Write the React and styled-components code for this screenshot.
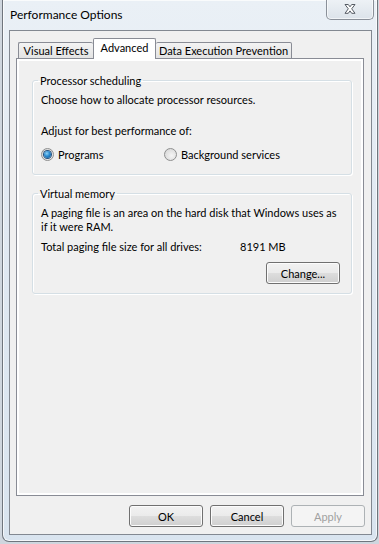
import styled, { createGlobalStyle } from "styled-components";

const GlobalStyle = createGlobalStyle`
  html, body {
    margin: 0;
    padding: 0;
    background: #cfd6de;
  }
  body {
    font-family: Lato, "Liberation Sans", sans-serif;
    font-size: 11px;
    color: #000;
  }
`;

function App() {
  return (
    <>
      <GlobalStyle />
      <Window>
        <TitleBar>
          <Title>Performance Options</Title>
          <CloseButton>
            <svg width="12" height="10" viewBox="0 0 12 10">
              <path
                d="M1 0.5 L4.3 0.5 L6 2.8 L7.7 0.5 L11 0.5 L7.7 4.8 L11 9.3 L7.7 9.3 L6 6.9 L4.3 9.3 L1 9.3 L4.3 4.8 Z"
                fill="#fff"
                stroke="#555b63"
                strokeWidth="1"
                strokeLinejoin="round"
              />
            </svg>
          </CloseButton>
        </TitleBar>
        <Client>
          <TabRow>
            <Tab $w={75} $side="left">Visual Effects</Tab>
            <Tab $w={63} $active>Advanced</Tab>
            <Tab $w={136} $side="right">Data Execution Prevention</Tab>
          </TabRow>
          <Panel>
            <Group>
              <Legend>Processor scheduling</Legend>
              <Line $top={4}>Choose how to allocate processor resources.</Line>
              <Line $top={16}>Adjust for best performance of:</Line>
              <RadioRow>
                <RadioLabel>
                  <Radio $checked />
                  Programs
                </RadioLabel>
                <RadioLabel>
                  <Radio />
                  Background services
                </RadioLabel>
              </RadioRow>
            </Group>
            <Group $bottom={9}>
              <Legend>Virtual memory</Legend>
              <Para>
                A paging file is an area on the hard disk that Windows uses as
                <br />
                if it were RAM.
              </Para>
              <SizeRow>
                <span>Total paging file size for all drives:</span>
                <span>8191 MB</span>
              </SizeRow>
              <ChangeRow>
                <Button>Change...</Button>
              </ChangeRow>
            </Group>
          </Panel>
          <ButtonRow>
            <Button>OK</Button>
            <Button>Cancel</Button>
            <Button disabled>Apply</Button>
          </ButtonRow>
        </Client>
      </Window>
    </>
  );
}

const Window = styled.div`
  box-sizing: border-box;
  width: 376px;
  height: 542px;
  margin-left: 2px;
  display: flex;
  flex-direction: column;
  padding: 0 5px 6px 6px;
  border: 1px solid #6f757d;
  border-top: none;
  border-radius: 0 0 7px 7px;
  background: linear-gradient(to bottom, #eaf0f6 0%, #e1e9f2 40%, #d9e4ef 100%);
  box-shadow: inset 0 0 0 1px rgba(255, 255, 255, 0.7);
`;

const TitleBar = styled.div`
  height: 30px;
  flex: none;
  display: flex;
  justify-content: space-between;
  align-items: flex-start;
`;

const Title = styled.div`
  padding-left: 1px;
  margin-top: 7px;
  font-size: 12px;
  line-height: 16px;
  color: #000;
`;

const CloseButton = styled.div`
  box-sizing: border-box;
  width: 48px;
  height: 21px;
  margin-top: -1px;
  margin-right: -2px;
  display: flex;
  align-items: center;
  justify-content: center;
  border: 1px solid #8a9099;
  border-top: none;
  border-radius: 0 0 5px 5px;
  background: linear-gradient(to bottom, #eef2f6, #dce3ea);
  box-shadow: inset 0 0 0 1px rgba(255, 255, 255, 0.6);
`;

const Client = styled.div`
  flex: 1;
  display: flex;
  flex-direction: column;
  padding: 7px 7px 7px 6px;
  border: 1px solid #828891;
  background: #f0f0f0;
`;

const TabRow = styled.div`
  display: flex;
  align-items: flex-end;
  padding-left: 2px;
  margin-bottom: -1px;
  position: relative;
  z-index: 1;
`;

const Tab = styled.div`
  box-sizing: border-box;
  width: ${(p) => p.$w}px;
  height: ${(p) => (p.$active ? 21 : 17)}px;
  line-height: ${(p) => (p.$active ? 18 : 16)}px;
  text-align: center;
  white-space: nowrap;
  border: 1px solid #898c95;
  border-bottom: ${(p) => (p.$active ? "none" : "1px solid #898c95")};
  ${(p) => p.$side === "left" && "border-right: none;"}
  ${(p) => p.$side === "right" && "border-left: none;"}
  border-radius: 2px 2px 0 0;
  background: ${(p) =>
    p.$active ? "#fff" : "linear-gradient(to bottom, #f3f3f3, #e3e3e3)"};
`;

const Panel = styled.div`
  flex: 1;
  display: flex;
  flex-direction: column;
  gap: 11px;
  padding: 14px 11px 0 15px;
  border: 1px solid #898c95;
  background: #f0f0f0;
  box-shadow: inset 0 0 0 2px #fff;
`;

const Group = styled.fieldset`
  margin: 0;
  min-width: 0;
  padding: 0 8px ${(p) => p.$bottom ?? 12}px 8px;
  border: 1px solid #d5dfe5;
  border-radius: 3px;
  box-shadow: inset 1px 1px 0 #fff, 1px 1px 0 #fff;
  white-space: nowrap;
`;

const Legend = styled.legend`
  margin-left: -3px;
  padding: 0 2px;
  line-height: 15px;
`;

const Line = styled.div`
  margin-top: ${(p) => p.$top}px;
  line-height: 15px;
`;

const RadioRow = styled.div`
  display: grid;
  grid-template-columns: 123px auto;
  margin-top: 9px;
  line-height: 15px;
`;

const RadioLabel = styled.label`
  display: flex;
  align-items: center;
  gap: 4px;
`;

const Radio = styled.span`
  box-sizing: border-box;
  width: 13px;
  height: 13px;
  border-radius: 50%;
  border: 1px solid #8e8f8f;
  display: inline-flex;
  align-items: center;
  justify-content: center;
  background: radial-gradient(circle at 60% 60%, #f5f5f5 0%, #dcdcdc 70%, #c8c8c8 100%);
  &::after {
    content: "";
    width: 7px;
    height: 7px;
    border-radius: 50%;
    display: ${(p) => (p.$checked ? "block" : "none")};
    background: radial-gradient(circle at 40% 35%, #8fd2f5 0%, #2a8ad0 45%, #0b4f8a 100%);
    box-shadow: 0 0 0 1px #27517d;
  }
`;

const Para = styled.div`
  margin-top: 5px;
  line-height: 14px;
`;

const SizeRow = styled.div`
  display: grid;
  grid-template-columns: 199px auto;
  margin-top: 6px;
  line-height: 14px;
`;

const ChangeRow = styled.div`
  display: flex;
  justify-content: flex-end;
  margin-top: 8px;
  padding-right: 3px;
`;

const Button = styled.button`
  box-sizing: border-box;
  width: 74px;
  height: 22px;
  padding: 0;
  font-family: inherit;
  font-size: 11px;
  color: ${(p) => (p.disabled ? "#a0a0a0" : "#000")};
  border: 1px solid ${(p) => (p.disabled ? "#adb2b5" : "#707070")};
  border-radius: 3px;
  background: ${(p) =>
    p.disabled
      ? "#f4f4f4"
      : "linear-gradient(to bottom, #f2f2f2 0%, #ebebeb 48%, #dddddd 52%, #cfcfcf 100%)"};
  box-shadow: inset 0 0 0 1px ${(p) => (p.disabled ? "#f4f4f4" : "#fcfcfc")};
`;

const ButtonRow = styled.div`
  display: flex;
  justify-content: flex-end;
  gap: 7px;
  margin-top: 9px;
  margin-right: -1px;
`;

export default App;
